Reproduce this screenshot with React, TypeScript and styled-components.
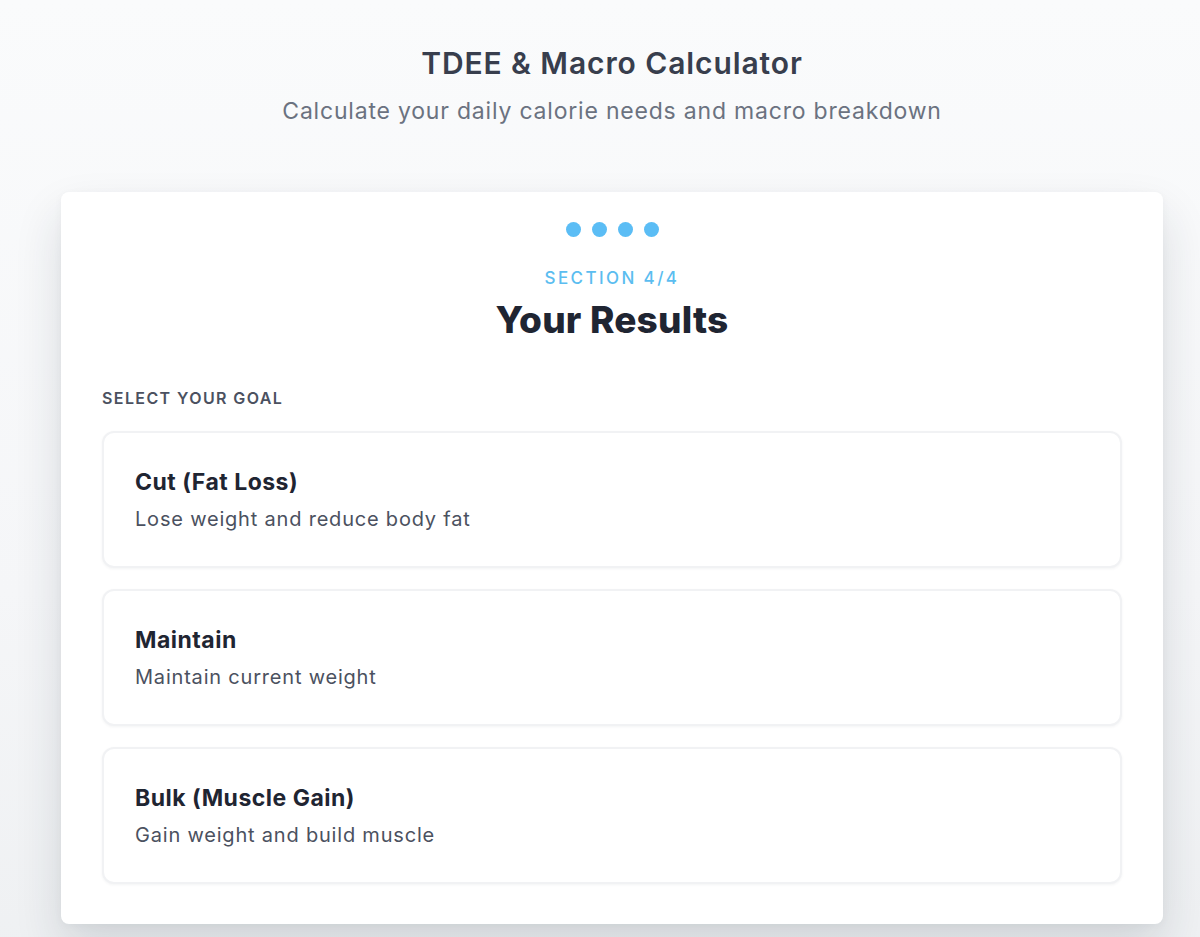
import React, { useState } from "react";
import styled, { createGlobalStyle } from "styled-components";

const GlobalStyle = createGlobalStyle`
  html, body {
    margin: 0;
    padding: 0;
  }
  body {
    font-family: "Inter", "Open Sans", sans-serif;
    background: linear-gradient(180deg, #fafbfc 0%, #f5f6f8 60%, #eef0f2 100%);
    min-height: 100vh;
  }
`;

const Page = styled.div`
  padding: 44px 37px 60px 61px;
`;

const Header = styled.header`
  display: flex;
  flex-direction: column;
  align-items: center;
  gap: 14px;
  margin-bottom: 66px;
`;

const AppTitle = styled.h1`
  margin: 0;
  font-size: 30px;
  line-height: 38px;
  font-weight: 600;
  letter-spacing: 0.9px;
  color: #383e4d;
`;

const AppSubtitle = styled.p`
  margin: 0;
  font-size: 23px;
  line-height: 30px;
  font-weight: 400;
  letter-spacing: 0.8px;
  color: #6b7280;
`;

const Card = styled.section`
  background: #ffffff;
  border-radius: 8px;
  padding: 30px 41px 40px;
  box-shadow: 0 24px 48px rgba(30, 40, 60, 0.14), 0 2px 8px rgba(30, 40, 60, 0.04);
`;

const Steps = styled.div`
  display: flex;
  justify-content: center;
  gap: 11px;
`;

const Dot = styled.span<{ $active: boolean }>`
  width: 15px;
  height: 15px;
  border-radius: 50%;
  background: ${(p) => (p.$active ? "#5bbdf5" : "#dbe3ea")};
`;

const SectionLabel = styled.div`
  margin-top: 30px;
  text-align: center;
  font-size: 17px;
  line-height: 22px;
  font-weight: 500;
  letter-spacing: 2.4px;
  color: #5bbdf0;
`;

const SectionTitle = styled.h2`
  margin: 8px 0 0;
  text-align: center;
  font-size: 37px;
  line-height: 46px;
  font-weight: 800;
  letter-spacing: 0.2px;
  color: #1f2532;
`;

const GroupLabel = styled.div`
  margin-top: 45px;
  font-size: 16px;
  line-height: 20px;
  font-weight: 600;
  letter-spacing: 1.4px;
  color: #4b5160;
`;

const Options = styled.div`
  margin-top: 23px;
  display: flex;
  flex-direction: column;
  gap: 21px;
`;

const Option = styled.button<{ $selected: boolean }>`
  display: flex;
  flex-direction: column;
  align-items: flex-start;
  justify-content: center;
  gap: 10px;
  height: 137px;
  padding: 0 31px;
  text-align: left;
  font-family: inherit;
  background: #ffffff;
  border: 2px solid ${(p) => (p.$selected ? "#5bbdf5" : "#f1f2f4")};
  border-radius: 12px;
  box-shadow: 0 1px 3px rgba(20, 30, 50, 0.05);
  cursor: pointer;
`;

const OptionTitle = styled.span`
  font-size: 23px;
  line-height: 28px;
  font-weight: 700;
  letter-spacing: 0.5px;
  color: #1f2532;
`;

const OptionText = styled.span`
  font-size: 20px;
  line-height: 26px;
  font-weight: 400;
  letter-spacing: 0.8px;
  color: #4b5160;
`;

const GOALS = [
  { id: "cut", title: "Cut (Fat Loss)", text: "Lose weight and reduce body fat" },
  { id: "maintain", title: "Maintain", text: "Maintain current weight" },
  { id: "bulk", title: "Bulk (Muscle Gain)", text: "Gain weight and build muscle" },
];

export default function App() {
  const [goal, setGoal] = useState<string | null>(null);

  return (
    <>
      <GlobalStyle />
      <Page>
        <Header>
          <AppTitle>TDEE &amp; Macro Calculator</AppTitle>
          <AppSubtitle>Calculate your daily calorie needs and macro breakdown</AppSubtitle>
        </Header>
        <Card>
          <Steps>
            {[1, 2, 3, 4].map((n) => (
              <Dot key={n} $active />
            ))}
          </Steps>
          <SectionLabel>SECTION 4/4</SectionLabel>
          <SectionTitle>Your Results</SectionTitle>
          <GroupLabel>SELECT YOUR GOAL</GroupLabel>
          <Options>
            {GOALS.map((g) => (
              <Option key={g.id} $selected={goal === g.id} onClick={() => setGoal(g.id)}>
                <OptionTitle>{g.title}</OptionTitle>
                <OptionText>{g.text}</OptionText>
              </Option>
            ))}
          </Options>
        </Card>
      </Page>
    </>
  );
}
